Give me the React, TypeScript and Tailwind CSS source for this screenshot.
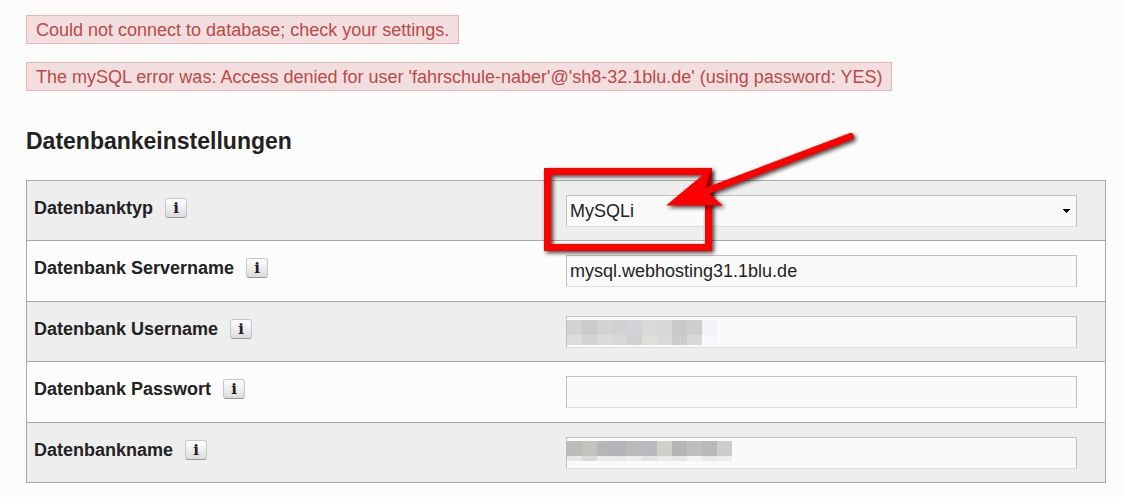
import { useState } from 'react';
import type { ReactNode } from 'react';

interface SettingRowProps {
  id: string;
  label: string;
  children: ReactNode;
}

interface RedactedValueProps {
  rows: { height: number; colors: string[] }[];
}

const ERRORS = [
  'Could not connect to database; check your settings.',
  "The mySQL error was: Access denied for user 'fahrschule-naber'@'sh8-32.1blu.de' (using password: YES)",
];

const USERNAME_BLOCKS = [
  {
    height: 15,
    colors: ['#d4d2cf', '#cbcbcb', '#d3d3d3', '#d1d1d1', '#d2d4d7', '#dadad8', '#d7d7d7', '#cbc9c6', '#cecece', '#f2f3f6'],
  },
  {
    height: 10,
    colors: ['#dddcda', '#d3d3d3', '#d9dcdb', '#d7d7d7', '#cfd0d2', '#dededb', '#d9d9d9', '#cdcdcd', '#d8d8d8', '#f7f8fb'],
  },
];

const DBNAME_BLOCKS = [
  {
    height: 15,
    colors: ['#bdbcba', '#c3c3c0', '#b6b6b6', '#b3b5b8', '#bdbbb9', '#b8babd', '#cfcfcc', '#b6b5b3', '#bcbec0', '#b9b9b9', '#cdcdcd'],
  },
  {
    height: 5,
    colors: ['#e7e7e7', '#dad9d7', '#ebebeb', '#e9eaec', '#ededed', '#e3e3e3', '#eaecec', '#e7e7e7', '#f5f3f2', '#e9eaec', '#ededed'],
  },
];

const fieldClass =
  'block h-8 w-full rounded-none border border-[#c0c0c0] border-b-[#dedede] bg-[#fafafa] px-[3px] text-[18px] leading-[22px] text-[#222] outline-none';

const SettingRow = ({ id, label, children }: SettingRowProps) => {
  return (
    <div className="flex items-start border-t border-[#a8a8a8] pt-[14px] odd:bg-[#eee] odd:pb-[13px] even:pb-[14px]">
      <div className="flex w-1/2 items-center gap-3 pl-[7px] pt-px">
        <label htmlFor={id} className="text-[18px] font-bold leading-6">
          {label}
        </label>
        <button
          type="button"
          aria-label={`Info: ${label}`}
          className="flex h-5 w-[22px] items-center justify-center rounded-[3px] border border-[#c6c6c6] border-b-[#999] bg-linear-to-b from-white to-[#dcdcdc] font-['DejaVu_Serif',serif] text-[15px] font-bold leading-none"
        >
          i
        </button>
      </div>
      <div className="w-1/2 pr-7">
        <div className="relative">{children}</div>
      </div>
    </div>
  );
};

const RedactedValue = ({ rows }: RedactedValueProps) => {
  return (
    <div className="pointer-events-none absolute left-px top-1" aria-hidden="true">
      {rows.map((row, i) => (
        <div key={i} className="flex" style={{ height: row.height }}>
          {row.colors.map((color, j) => (
            <span key={j} className="w-[15px]" style={{ backgroundColor: color }} />
          ))}
        </div>
      ))}
    </div>
  );
};

// Frame and arrow that highlight the database type
const Highlight = () => {
  return (
    <svg
      className="pointer-events-none absolute -left-10 -top-20 z-10 h-[160px] w-[340px] max-w-none"
      viewBox="0 0 340 160"
      fill="none"
      aria-hidden="true"
    >
      <g className="drop-shadow-[2px_2px_2px_rgba(0,0,0,0.75)]">
        <rect x="21.5" y="56.5" width="161" height="76" stroke="#f00" strokeWidth="7" />
      </g>
      <g className="drop-shadow-[2px_2px_2px_rgba(0,0,0,0.75)]">
        <path d="M324.500 21.5 182 75.500" stroke="#f00" strokeWidth="7" strokeLinecap="round" />
        <path d="M140 90.5 184.500 53.500 180 72 184 79.500 197 90.500Z" fill="#f00" />
      </g>
    </svg>
  );
};

export default function App() {
  const [dbType, setDbType] = useState('mysqli');

  return (
    <main className="min-h-screen bg-[#fcfcfc] pb-[14px] pl-[26px] pr-4 pt-[15px] font-['Liberation_Sans',Arial,sans-serif] text-[#222]">
      <div className="flex flex-col items-start gap-[18px]">
        {ERRORS.map((error) => (
          <p
            key={error}
            className="border border-[#e6b5b7] bg-[#f2dede] px-[9px] pb-px pt-[2px] text-[18px] leading-6 text-[#b94a48]"
          >
            {error}
          </p>
        ))}
      </div>

      <h2 className="mb-6 mt-9 text-[23px] font-bold leading-[29px]">Datenbankeinstellungen</h2>

      <form className="border-x border-b border-[#a8a8a8]" onSubmit={(e) => e.preventDefault()}>
        <SettingRow id="db-type" label="Datenbanktyp">
          <select
            id="db-type"
            value={dbType}
            onChange={(e) => setDbType(e.target.value)}
            className={`${fieldClass} appearance-none`}
          >
            <option value="mysqli">MySQLi</option>
            <option value="mysql">MySQL</option>
          </select>
          <svg
            className="pointer-events-none absolute right-[7px] top-[14px] h-1 w-[7px]"
            viewBox="0 0 7 4"
            shapeRendering="crispEdges"
            aria-hidden="true"
          >
            <path d="M0 0h7v1H6v1H5v1H4v1H3V3H2V2H1V1H0Z" fill="#000" />
          </svg>
          <Highlight />
        </SettingRow>
        <SettingRow id="db-server" label="Datenbank Servername">
          <input id="db-server" type="text" defaultValue="mysql.webhosting31.1blu.de" className={fieldClass} />
        </SettingRow>
        <SettingRow id="db-user" label="Datenbank Username">
          <input id="db-user" type="text" className={fieldClass} />
          <RedactedValue rows={USERNAME_BLOCKS} />
        </SettingRow>
        <SettingRow id="db-password" label="Datenbank Passwort">
          <input id="db-password" type="password" className={fieldClass} />
        </SettingRow>
        <SettingRow id="db-name" label="Datenbankname">
          <input id="db-name" type="text" className={fieldClass} />
          <RedactedValue rows={DBNAME_BLOCKS} />
        </SettingRow>
      </form>
    </main>
  );
}
